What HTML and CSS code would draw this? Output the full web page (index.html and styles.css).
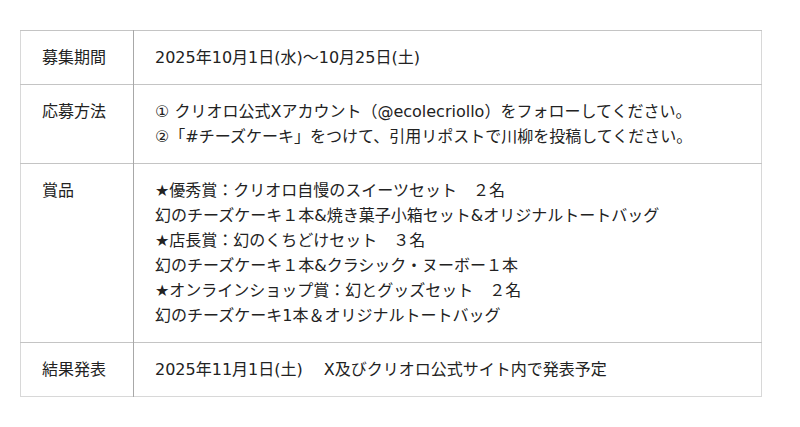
FILE: index.html
```html
<!DOCTYPE html>
<html lang="ja">
<head>
<meta charset="utf-8">
<link rel="stylesheet" href="styles.css">
</head>
<body>
<div class="wrap">
<table class="info">
<tr>
<th>募集期間</th>
<td>2025年10月1日(水)〜10月25日(土)</td>
</tr>
<tr>
<th>応募方法</th>
<td>① クリオロ公式Xアカウント（@ecolecriollo）をフォローしてください。<br>②「#チーズケーキ」をつけて、引用リポストで川柳を投稿してください。</td>
</tr>
<tr>
<th>賞品</th>
<td>★優秀賞：クリオロ自慢のスイーツセット　２名<br>幻のチーズケーキ１本&amp;焼き菓子小箱セット&amp;オリジナルトートバッグ<br>★店長賞：幻のくちどけセット　３名<br>幻のチーズケーキ１本&amp;クラシック・ヌーボー１本<br>★オンラインショップ賞：幻とグッズセット　２名<br>幻のチーズケーキ1本＆オリジナルトートバッグ</td>
</tr>
<tr>
<th>結果発表</th>
<td>2025年11月1日(土)　 X及びクリオロ公式サイト内で発表予定</td>
</tr>
</table>
</div>
</body>
</html>
```
FILE: styles.css
```css
html, body {
  margin: 0;
  padding: 0;
  background: #fff;
}
.wrap {
  padding: 30px 38px 0 20px;
}
.info {
  width: 742px;
  border-collapse: collapse;
  font-family: "DejaVu Sans", "Noto Sans CJK JP", sans-serif;
  font-size: 16px;
  line-height: 25px;
  color: #222;
  border: 1px solid #d8d8d8;
}
.info th,
.info td {
  text-align: left;
  vertical-align: top;
  font-weight: normal;
  padding: 14px 0 14px 21px;
  border-top: 1px solid #c4c4c4;
}
.info th {
  width: 91px;
  border-right: 1px solid #a8a8a8;
}
```
